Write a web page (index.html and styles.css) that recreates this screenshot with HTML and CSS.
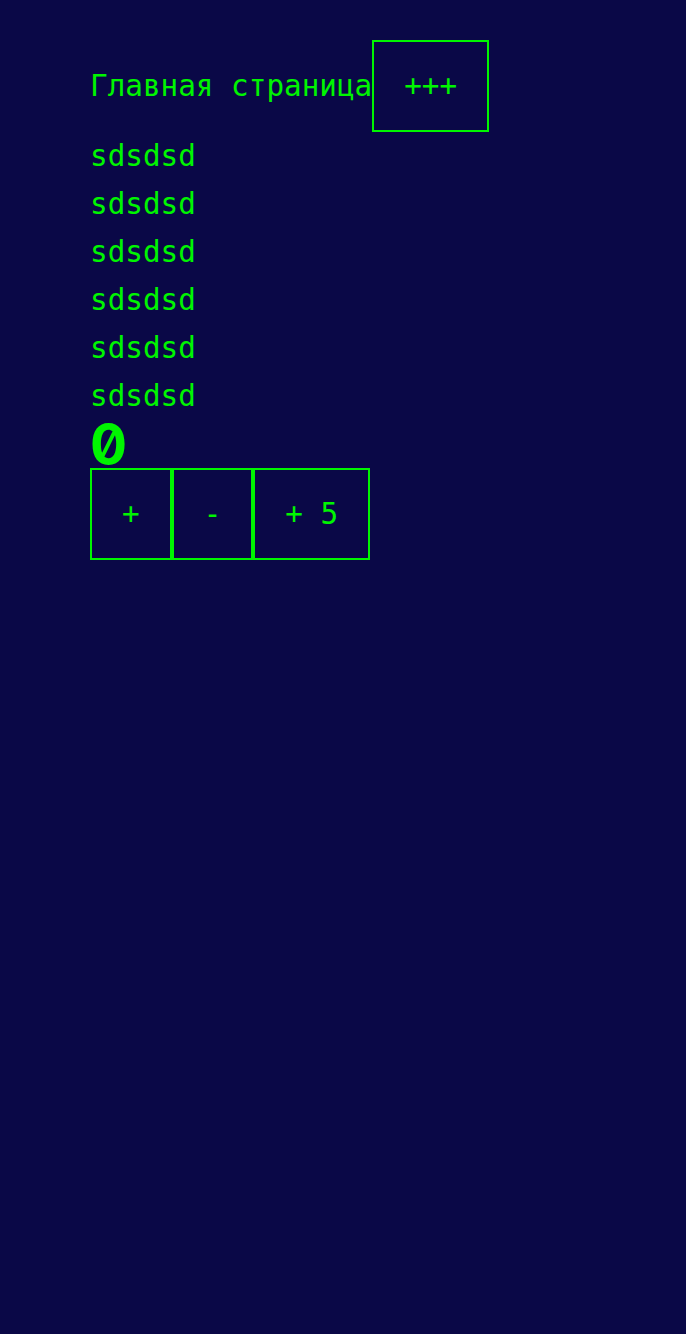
FILE: index.html
```html
<!DOCTYPE html>
<html lang="ru">
<head>
<meta charset="utf-8">
<title>Главная страница</title>
<link rel="stylesheet" href="styles.css">
</head>
<body>
<div class="page">
  <header class="header">
    <span class="title">Главная страница</span>
    <button class="btn">+++</button>
  </header>
  <ul class="list">
    <li>sdsdsd</li>
    <li>sdsdsd</li>
    <li>sdsdsd</li>
    <li>sdsdsd</li>
    <li>sdsdsd</li>
    <li>sdsdsd</li>
  </ul>
  <div class="counter">0</div>
  <div class="controls">
    <button class="btn">+</button>
    <button class="btn">-</button>
    <button class="btn">+ 5</button>
  </div>
</div>
</body>
</html>
```
FILE: styles.css
```css
html, body {
  margin: 0;
  padding: 0;
  background: #0a0847;
  min-height: 100%;
}
body {
  font-family: "DejaVu Sans Mono", monospace;
  font-size: 29.3px;
  color: #00f500;
}
.page {
  padding: 40px 0 0 90px;
}
.header {
  display: flex;
  align-items: center;
}
.title {
  white-space: pre;
}
.btn {
  font-family: inherit;
  font-size: inherit;
  color: inherit;
  background: transparent;
  border: 2px solid #00f500;
  padding: 0 30px;
  height: 92px;
  line-height: 34px;
  margin: 0;
  border-radius: 0;
  cursor: pointer;
  white-space: pre;
}
.list {
  list-style: none;
  margin: 0;
  padding: 0;
}
.list li {
  height: 48px;
  line-height: 48px;
}
.counter {
  font-family: "Inter", "DejaVu Sans Mono", sans-serif;
  font-weight: bold;
  font-feature-settings: "zero";
  font-size: 55px;
  line-height: 48px;
  height: 48px;
}
.controls {
  display: flex;
}
```
